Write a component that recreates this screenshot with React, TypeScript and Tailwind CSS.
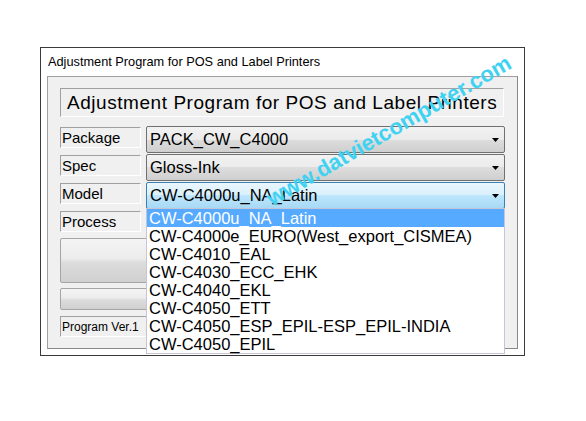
import React from "react";

const font = { fontFamily: '"Liberation Sans", Arial, sans-serif' };

function Arrow() {
  return (
    <svg width="7" height="4" viewBox="0 0 7 4" className="absolute right-[5px] top-1/2 -translate-y-1/2">
      <path d="M0 0 H7 L3.5 4 Z" fill="#000" />
    </svg>
  );
}

function Combo({ text, active = false, children }: { text: string; active?: boolean; children?: React.ReactNode }) {
  return (
    <div
      className={
        "relative ml-[5px] w-[359px] h-[27px] rounded-[2px] border flex items-center pl-[3px] text-[16.5px] text-black " +
        (active
          ? "border-[#3c7fb1] bg-[linear-gradient(to_bottom,#eaf6fd_0%,#d9f0fc_50%,#bee6fd_50%,#a7d9f5_100%)]"
          : "border-[#707070] bg-[linear-gradient(to_bottom,#f2f2f2_0%,#ebebeb_50%,#dddddd_50%,#cfcfcf_100%)]")
      }
    >
      <span className="leading-none">{text}</span>
      <Arrow />
      {children}
    </div>
  );
}

function Label({ text }: { text: string }) {
  return (
    <div className="mt-[1px] w-[81px] h-[21px] border border-t-[#a0a0a0] border-l-[#a0a0a0] border-r-white border-b-white flex items-center pl-[1px] text-[15px] text-black leading-none">
      {text}
    </div>
  );
}

const items = [
  "CW-C4000u_NA_Latin",
  "CW-C4000e_EURO(West_export_CISMEA)",
  "CW-C4010_EAL",
  "CW-C4030_ECC_EHK",
  "CW-C4040_EKL",
  "CW-C4050_ETT",
  "CW-C4050_ESP_EPIL-ESP_EPIL-INDIA",
  "CW-C4050_EPIL",
];

export default function App() {
  return (
    <div className="relative w-[586px] h-[421px] bg-white overflow-hidden" style={font}>
      <div className="ml-[40px] pt-[47px]">
        <div className="w-[485px] h-[309px] border border-[#3a3a3a] bg-white flex flex-col">
          <div className="h-[28px] flex items-center pl-[7px] text-[12.75px] text-black">
            Adjustment Program for POS and Label Printers
          </div>
          <div className="ml-[6px] w-[471px] h-[273px] border border-t-[#a0a0a0] border-l-[#a0a0a0] border-r-[#8a8a8a] border-b-[#8a8a8a] bg-[#f0f0f0] pl-[12px] pt-[11px] flex flex-col">
            <div className="w-[444px] h-[29px] border border-t-[#a0a0a0] border-l-[#a0a0a0] border-r-white border-b-white flex items-center pl-[6px] text-[19px] tracking-[0.55px] text-black leading-none">
              Adjustment Program for POS and Label Printers
            </div>
            <div className="mt-[9px] flex flex-col gap-[1px]">
              <div className="flex items-start h-[27px]">
                <Label text="Package" />
                <Combo text="PACK_CW_C4000" />
              </div>
              <div className="flex items-start h-[27px]">
                <Label text="Spec" />
                <Combo text="Gloss-Ink" />
              </div>
              <div className="relative z-10 flex items-start h-[27px]">
                <Label text="Model" />
                <Combo text="CW-C4000u_NA_Latin" active>
                  <div className="absolute left-[-1px] top-full w-[359px] h-[146px] border border-[#c5c5d5] bg-white flex flex-col">
                    {items.map((it, i) => (
                      <div
                        key={it}
                        className={
                          "h-[18px] flex items-center pl-[2px] text-[16.5px] leading-none whitespace-nowrap " +
                          (i === 0 ? "bg-[#56aaff] text-white" : "text-black")
                        }
                      >
                        {it}
                      </div>
                    ))}
                  </div>
                </Combo>
              </div>
              <div className="flex items-start h-[27px]">
                <Label text="Process" />
                <Combo text="" />
              </div>
            </div>
            <div className="mt-[1px] w-[445px] h-[45px] rounded-[2px] border border-[#a5a5a5] bg-[linear-gradient(to_bottom,#f4f4f4_0%,#ececec_45%,#dcdcdc_55%,#d0d0d0_100%)]" />
            <div className="mt-[5px] w-[445px] h-[22px] rounded-[2px] border border-[#a5a5a5] bg-[linear-gradient(to_bottom,#f4f4f4_0%,#ececec_45%,#dcdcdc_55%,#d0d0d0_100%)]" />
            <div className="mt-[6px] w-[445px] h-[21px] border border-t-[#a0a0a0] border-l-[#a0a0a0] border-r-white border-b-white flex items-center pl-[1px] text-[12px] text-black leading-none">
              Program Ver.1
            </div>
          </div>
        </div>
      </div>
      <div className="absolute left-[389px] top-[131px] -translate-x-1/2 -translate-y-1/2 -rotate-[30deg] whitespace-nowrap text-[22px] font-bold text-[#3fd2f2] leading-none z-20">
        www.datvietcomputer.com
      </div>
    </div>
  );
}
